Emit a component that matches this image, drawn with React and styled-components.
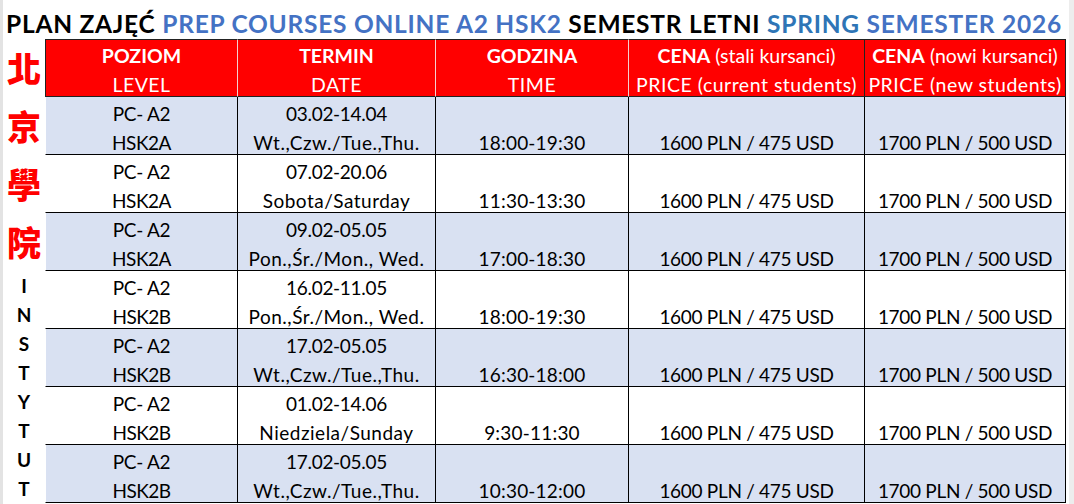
import React from "react";
import styled, { createGlobalStyle } from "styled-components";

const Global = createGlobalStyle`
  html, body { margin: 0; padding: 0; background: #ffffff; }
  body { font-family: Lato, "Noto Sans", sans-serif; color: #000; }
`;

const Page = styled.div`
  width: 1074px;
  height: 504px;
  box-sizing: border-box;
  border-left: 3px solid #e3e3e3;
  border-right: 5px solid #ededed;
  background: #fff;
  overflow: hidden;
`;

const Title = styled.div`
  height: 39px;
  box-sizing: border-box;
  padding: 9px 0 0 3px;
  font-size: 24.5px;
  line-height: 30px;
  font-weight: 700;
  white-space: nowrap;
  letter-spacing: 0.75px;
`;

const Ink = styled.span`
  color: ${(p) => p.$c || "#000"};
`;

const Body = styled.div`
  display: flex;
`;

const Side = styled.div`
  width: 42px;
  display: flex;
  flex-direction: column;
  align-items: center;
`;

const Han = styled.div`
  height: 58px;
  line-height: 58px;
  font-family: "Noto Sans CJK TC", "Noto Sans CJK SC", sans-serif;
  font-weight: 900;
  font-size: 34px;
  color: #ff0000;
`;

const Letter = styled.div`
  height: 29px;
  line-height: 29px;
  font-size: 19px;
  font-weight: 700;
`;

const Grid = styled.div`
  display: grid;
  grid-template-columns: 193px 198px 193px 236px 201px;
  grid-auto-rows: 58px;
`;

const Cell = styled.div`
  box-sizing: border-box;
  height: 58px;
  padding-top: 2px;
  display: flex;
  flex-direction: column;
  align-items: center;
  font-size: 19px;
  background: ${(p) => (p.$shade ? "#d9e1f2" : "#ffffff")};
  border-bottom: 1px solid #000;
  border-right: 1px solid #000;
  border-left: ${(p) => (p.$first ? "1px solid #fff" : "none")};
`;

const HeadCell = styled(Cell)`
  background: #ff0000;
  color: #fff;
  font-size: 19.5px;
  border-top: 1px solid #222;
  border-bottom: 1px solid #222;
  border-left: ${(p) => (p.$first ? "1px solid #222" : "none")};
  border-right: 1px solid ${(p) => (p.$dark ? "#222" : "#f4d0d0")};
  padding-top: 1px;
`;

const Line = styled.div`
  height: 29px;
  line-height: 29px;
  white-space: nowrap;
  letter-spacing: ${(p) => p.$track ?? 0}px;
`;

const B = styled.b`
  font-weight: 700;
`;

const rows = [
  ["HSK2A", "03.02-14.04", "Wt.,Czw./Tue.,Thu.", "18:00-19:30"],
  ["HSK2A", "07.02-20.06", "Sobota/Saturday", "11:30-13:30"],
  ["HSK2A", "09.02-05.05", "Pon.,Śr./Mon., Wed.", "17:00-18:30"],
  ["HSK2B", "16.02-11.05", "Pon.,Śr./Mon., Wed.", "18:00-19:30"],
  ["HSK2B", "17.02-05.05", "Wt.,Czw./Tue.,Thu.", "16:30-18:00"],
  ["HSK2B", "01.02-14.06", "Niedziela/Sunday", "9:30-11:30"],
  ["HSK2B", "17.02-05.05", "Wt.,Czw./Tue.,Thu.", "10:30-12:00"],
];

const headers = [
  [<B>POZIOM</B>, "LEVEL"],
  [<B>TERMIN</B>, "DATE"],
  [<B>GODZINA</B>, "TIME"],
  [<><B>CENA</B> (stali kursanci)</>, "PRICE (current students)"],
  [<><B>CENA</B> (nowi kursanci)</>, "PRICE (new students)"],
];

export default function App() {
  return (
    <>
      <Global />
      <Page>
        <Title>
          <Ink>PLAN ZAJĘĆ </Ink>
          <Ink $c="#4472c4">PREP COURSES ONLINE A2 HSK2 </Ink>
          <Ink>SEMESTR LETNI </Ink>
          <Ink $c="#2e75b6">SPRING </Ink>
          <Ink $c="#4472c4">SEMESTER 2026</Ink>
        </Title>
        <Body>
          <Side>
            {["北", "京", "學", "院"].map((c) => (
              <Han key={c}>{c}</Han>
            ))}
            {"INSTYTUT".split("").map((c, i) => (
              <Letter key={i}>{c}</Letter>
            ))}
          </Side>
          <Grid>
            {headers.map((h, i) => (
              <HeadCell key={"h" + i} $first={i === 0} $dark={i >= 3}>
                <Line $track={0}>{h[0]}</Line>
                <Line $track={0.5}>{h[1]}</Line>
              </HeadCell>
            ))}
            {rows.map((r, ri) => {
              const shade = ri % 2 === 0;
              return (
                <React.Fragment key={ri}>
                  <Cell $shade={shade} $first>
                    <Line $track={-0.3}>PC- A2</Line>
                    <Line $track={-0.5}>{r[0]}</Line>
                  </Cell>
                  <Cell $shade={shade}>
                    <Line $track={-0.3}>{r[1]}</Line>
                    <Line $track={0.5}>{r[2]}</Line>
                  </Cell>
                  <Cell $shade={shade}>
                    <Line>&nbsp;</Line>
                    <Line $track={0.2}>{r[3]}</Line>
                  </Cell>
                  <Cell $shade={shade}>
                    <Line>&nbsp;</Line>
                    <Line $track={-0.3}>1600 PLN / 475 USD</Line>
                  </Cell>
                  <Cell $shade={shade}>
                    <Line>&nbsp;</Line>
                    <Line $track={-0.3}>1700 PLN / 500 USD</Line>
                  </Cell>
                </React.Fragment>
              );
            })}
          </Grid>
        </Body>
      </Page>
    </>
  );
}
